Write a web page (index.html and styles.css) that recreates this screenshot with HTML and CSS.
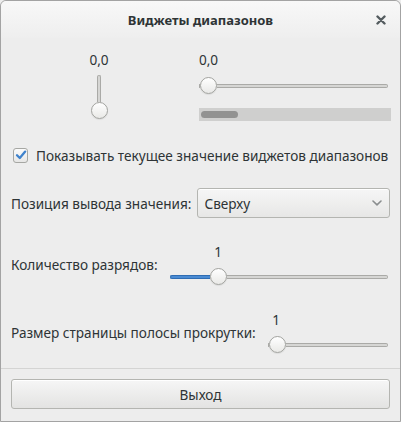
FILE: index.html
```html
<!DOCTYPE html>
<html lang="ru">
<head>
<meta charset="utf-8">
<title>Виджеты диапазонов</title>
<link rel="stylesheet" href="styles.css">
</head>
<body>
<div class="window">
  <header class="titlebar">
    <span class="spacer"></span>
    <h1 class="title">Виджеты диапазонов</h1>
    <button class="close" aria-label="Закрыть">
      <svg width="10" height="10" viewBox="0 0 10 10"><path d="M1.5 1.5 L8.5 8.5 M8.5 1.5 L1.5 8.5" stroke="#545c5f" stroke-width="2.4" stroke-linecap="round"/></svg>
    </button>
  </header>

  <main class="content">
    <div class="scales">
      <div class="vscale">
        <div class="value">0,0</div>
        <div class="vtrough"></div>
        <div class="handle"></div>
      </div>
      <div class="hcol">
        <div class="hscale">
          <div class="value-row"><span class="offset" style="width:1px"></span><span class="value">0,0</span></div>
          <div class="track"><span class="trough start" style="width:1px"></span><span class="handle"></span><span class="trough rest"></span></div>
        </div>
        <div class="scrollbar"><div class="thumb"></div></div>
      </div>
    </div>

    <label class="check-row">
      <span class="checkbox">
        <svg width="12" height="12" viewBox="0 0 12 12"><path d="M2 6.2 L4.8 9 L10.2 2.6" fill="none" stroke="#3f82cc" stroke-width="2.3" stroke-linecap="round" stroke-linejoin="round"/></svg>
      </span>
      <span>Показывать текущее значение виджетов диапазонов</span>
    </label>

    <div class="row combo-row">
      <span class="label">Позиция вывода значения:</span>
      <div class="combo">
        <span>Сверху</span>
        <svg width="10" height="6" viewBox="0 0 10 6"><path d="M1 1 L5 4.8 L9 1" fill="none" stroke="#8a8e8f" stroke-width="1.6" stroke-linecap="round" stroke-linejoin="round"/></svg>
      </div>
    </div>

    <div class="row digits-row">
      <span class="label">Количество разрядов:</span>
      <div class="hscale grow">
        <div class="value-row"><span class="offset" style="width:40px"></span><span class="value">1</span></div>
        <div class="track"><span class="trough fill" style="width:40px"></span><span class="handle"></span><span class="trough rest"></span></div>
      </div>
    </div>

    <div class="row page-row">
      <span class="label">Размер страницы полосы прокрутки:</span>
      <div class="hscale grow">
        <div class="value-row"><span class="offset" style="width:0px"></span><span class="value">1</span></div>
        <div class="track"><span class="trough start" style="width:0px"></span><span class="handle"></span><span class="trough rest"></span></div>
      </div>
    </div>
  </main>

  <footer class="actions">
    <button class="button">Выход</button>
  </footer>
</div>
</body>
</html>
```

FILE: styles.css
```css
html, body {
  margin: 0;
  padding: 0;
  background: #ededed;
}

.window {
  width: 401px;
  height: 422px;
  box-sizing: border-box;
  border: 1px solid #a3a3a3;
  border-radius: 6px 6px 0 0;
  background: #ededed;
  display: flex;
  flex-direction: column;
  overflow: hidden;
  font-family: "Noto Sans", "Open Sans", sans-serif;
  font-size: 13.6px;
  color: #2e3436;
}

/* Title bar */
.titlebar {
  height: 37px;
  flex: none;
  display: grid;
  grid-template-columns: 1fr auto 1fr;
  align-items: center;
  background: linear-gradient(#f8f8f8, #eeeeee);
  border-radius: 5px 5px 0 0;
}

.title {
  margin: 0;
  font-size: 13px;
  font-weight: bold;
  color: #2e3436;
}

.close {
  justify-self: end;
  width: 24px;
  height: 24px;
  margin-right: 7px;
  padding: 0;
  border: 0;
  background: none;
  display: flex;
  align-items: center;
  justify-content: center;
}

/* Main content */
.content {
  flex: 1;
  padding: 13px 10px 0;
  display: flex;
  flex-direction: column;
}

.value {
  line-height: 18px;
  height: 18px;
}

.handle {
  width: 17px;
  height: 17px;
  flex: none;
  box-sizing: border-box;
  border-radius: 50%;
  border: 1px solid #a2a39f;
  background: linear-gradient(#ffffff, #e9e9e7);
  box-shadow: 0 1px 1px rgba(0, 0, 0, 0.08);
}

.scales {
  display: flex;
}

.vscale {
  width: 176px;
  display: flex;
  flex-direction: column;
  align-items: center;
}

.vtrough {
  margin-top: 6px;
  width: 4px;
  height: 27px;
  box-sizing: border-box;
  border: 1px solid #aaaaa7;
  border-bottom: 0;
  border-radius: 2px 2px 0 0;
  background: #d6d6d4;
}

.hcol {
  flex: 1;
  margin-left: 12px;
  margin-right: -1px;
  display: flex;
  flex-direction: column;
}

.hscale {
  display: flex;
  flex-direction: column;
  margin-right: 3px;
}

.hscale.grow {
  flex: 1;
  margin-right: 2px;
}

.value-row {
  display: flex;
}

.value-row .offset {
  flex: none;
}

.value-row .value {
  width: 17px;
  display: flex;
  justify-content: center;
}

.track {
  margin-top: 8px;
  display: flex;
  align-items: center;
}

.trough {
  height: 4px;
  box-sizing: border-box;
  border: 1px solid #aaaaa7;
  background: #d6d6d4;
  flex: none;
}

.trough.start {
  border-right: 0;
  border-radius: 2px 0 0 2px;
}

.trough.rest {
  flex: 1;
  border-left: 0;
  border-radius: 0 2px 2px 0;
}

.trough.fill {
  border-color: #2f6db3;
  border-right: 0;
  border-radius: 2px 0 0 2px;
  background: #4a8bd3;
}

.scrollbar {
  margin-top: 14px;
  height: 13px;
  background: #cfcfce;
  padding: 3px 2px;
  box-sizing: border-box;
}

.thumb {
  width: 37px;
  height: 7px;
  border-radius: 4px;
  background: #929291;
}

/* Checkbox */
.check-row {
  margin-top: 24px;
  height: 20px;
  display: flex;
  align-items: center;
  gap: 8px;
}

.checkbox {
  margin-left: 2px;
  width: 15px;
  height: 15px;
  box-sizing: border-box;
  border: 1px solid #a6a7a3;
  border-radius: 3px;
  background: linear-gradient(#fbfbfb, #e6e6e5);
  display: flex;
  align-items: center;
  justify-content: center;
}

/* Rows */
.row {
  display: flex;
  align-items: center;
  gap: 11px;
}

.combo-row {
  margin-top: 23px;
  gap: 5px;
}

.digits-row {
  margin-top: 25px;
  gap: 12px;
}

.digits-row .track,
.page-row .track {
  margin-top: 7px;
}

.page-row {
  margin-top: 26px;
  gap: 12px;
}

.combo {
  flex: 1;
  height: 30px;
  box-sizing: border-box;
  border: 1px solid #b4b5b1;
  border-radius: 3px;
  background: linear-gradient(#f6f6f6, #e7e7e6);
  box-shadow: inset 0 1px #ffffff;
  display: flex;
  align-items: center;
  justify-content: space-between;
  padding: 0 7px 0 7px;
}

/* Footer */
.actions {
  flex: none;
  border-top: 1px solid #d4d4d3;
  padding: 10px 10px 12px;
}

.button {
  width: 100%;
  height: 30px;
  box-sizing: border-box;
  border: 1px solid #b4b5b1;
  border-radius: 3px;
  background: linear-gradient(#f6f6f6, #e3e3e2);
  box-shadow: inset 0 1px #ffffff;
  font: inherit;
  color: #2e3436;
  padding: 0;
}
```
